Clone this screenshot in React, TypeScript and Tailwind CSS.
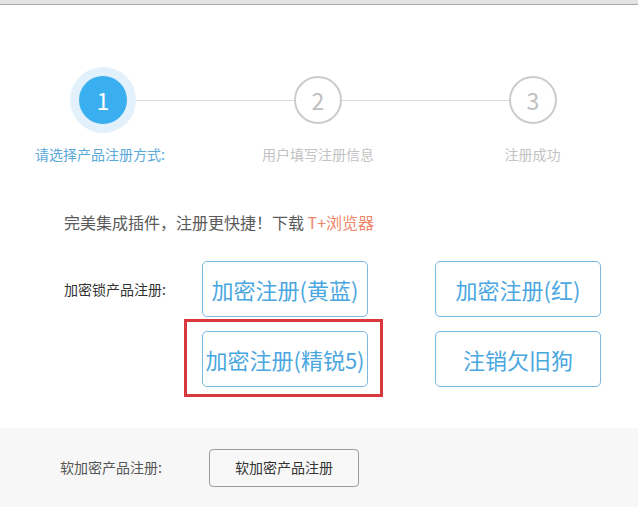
import React from "react";

const font = { fontFamily: '"Noto Sans CJK SC", "Noto Sans", sans-serif' };

const steps = [
  { label: "请选择产品注册方式:", active: true },
  { label: "用户填写注册信息", active: false },
  { label: "注册成功", active: false },
];

function BigButton({ children }: { children: React.ReactNode }) {
  return (
    <button className="flex h-[56px] w-[166px] items-center justify-center rounded-[5px] border border-[#7ab8e0] bg-white text-[22px] leading-none text-[#4ba7e0] whitespace-nowrap">
      {children}
    </button>
  );
}

export default function App() {
  return (
    <div className="flex h-[511px] w-[638px] flex-col bg-white" style={font}>
      {/* top window edge */}
      <div className="h-[5px] shrink-0 border-b border-[#a9a9a9] bg-[#e4e4e4]" />

      {/* Progress steps */}
      <div className="mt-[62px] flex h-[66px] items-center pl-[70px] pr-[81px]">
        <div className="flex h-[66px] w-[66px] shrink-0 items-center justify-center rounded-full bg-[#e2f1fc]">
          <div className="flex h-[48px] w-[48px] items-center justify-center rounded-full bg-[#3aaff0] text-[23px] text-white">
            1
          </div>
        </div>
        <div className="h-px w-[158px] shrink-0 bg-[#dcdcdc]" />
        <div className="flex h-[48px] w-[48px] shrink-0 items-center justify-center rounded-full border-2 border-[#cccccc] text-[23px] text-[#c0c0c0]">
          2
        </div>
        <div className="h-px flex-1 bg-[#dcdcdc]" />
        <div className="flex h-[48px] w-[48px] shrink-0 items-center justify-center rounded-full border-2 border-[#cccccc] text-[23px] text-[#c0c0c0]">
          3
        </div>
      </div>
      <div className="mt-[11px] grid grid-cols-[200px_236px_193px] text-[14px] leading-[20px]">
        {steps.map((s) => (
          <div
            key={s.label}
            className={`text-center whitespace-nowrap ${s.active ? "text-[#5aa9d9]" : "text-[#c2c2c2]"}`}
          >
            {s.label}
          </div>
        ))}
      </div>

      {/* Plugin hint */}
      <p className="mt-[46px] pl-[64px] text-[16px] leading-[24px] text-[#5a5a5a]">
        完美集成插件，注册更快捷！下载 <span className="text-[#f0876a]">T+浏览器</span>
      </p>

      {/* Dongle registration */}
      <div className="mt-[27px] flex pl-[64px]">
        <div className="flex h-[56px] w-[138px] items-center text-[14px] text-[#333333]">
          加密锁产品注册:
        </div>
        <div className="grid grid-cols-[166px_166px] gap-x-[67px] gap-y-[14px]">
          <BigButton>加密注册(黄蓝)</BigButton>
          <BigButton>加密注册(红)</BigButton>
          <div className="relative">
            <BigButton>加密注册(精锐5)</BigButton>
            <div className="pointer-events-none absolute -left-[18px] -top-[12px] h-[78px] w-[199px] border-[3px] border-[#d9393c]" />
          </div>
          <BigButton>注销欠旧狗</BigButton>
        </div>
      </div>

      {/* Soft encryption */}
      <div className="mt-[41px] flex h-[79px] items-center bg-[#f7f7f7] pl-[60px]">
        <span className="w-[149px] text-[14px] text-[#555555]">软加密产品注册:</span>
        <button className="flex h-[38px] w-[150px] items-center justify-center rounded-[4px] border border-[#9a9a9a] bg-[#f8f8f8] text-[14px] text-[#333333]">
          软加密产品注册
        </button>
      </div>
    </div>
  );
}
